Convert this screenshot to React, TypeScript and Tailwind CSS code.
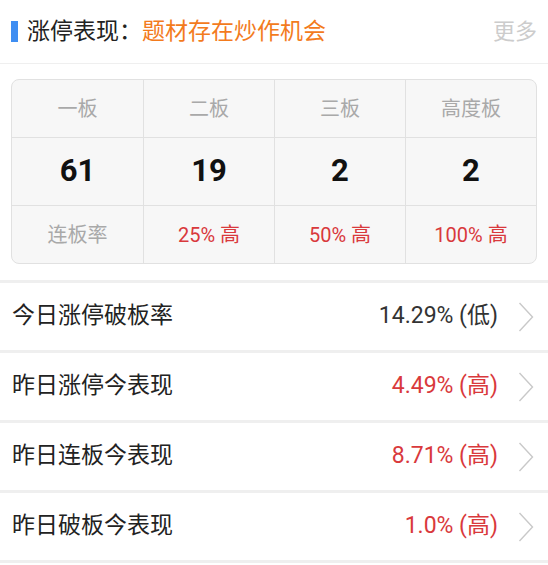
const font = "font-['Roboto','Noto_Sans_CJK_SC',sans-serif]";

type Cell = { head: string; count: number; rate: string; muted?: boolean };

const cells: Cell[] = [
  { head: '一板', count: 61, rate: '连板率', muted: true },
  { head: '二板', count: 19, rate: '25% 高' },
  { head: '三板', count: 2, rate: '50% 高' },
  { head: '高度板', count: 2, rate: '100% 高' },
];

type Row = { label: string; value: string; high: boolean };

const rows: Row[] = [
  { label: '今日涨停破板率', value: '14.29% (低)', high: false },
  { label: '昨日涨停今表现', value: '4.49% (高)', high: true },
  { label: '昨日连板今表现', value: '8.71% (高)', high: true },
  { label: '昨日破板今表现', value: '1.0% (高)', high: true },
];

function Chevron() {
  return (
    <svg width="16" height="30" viewBox="0 0 16 30" fill="none" className="shrink-0">
      <polyline points="1.5,1 14.5,15 1.5,29" stroke="#c9c9c9" strokeWidth="1.4" />
    </svg>
  );
}

export default function App() {
  return (
    <div className={`${font} min-h-[565px] w-[548px] bg-white`}>
      <div className="flex h-[64px] items-center border-b border-[#efefef] pr-[11px]">
        <div className="ml-[11px] h-[21px] w-[7px] bg-[#3f8ef2]" />
        <div className="ml-[9px] text-[23px] leading-none text-[#222222]">涨停表现：</div>
        <div className="text-[23px] leading-none text-[#f37b1d]">题材存在炒作机会</div>
        <div className="ml-auto text-[22px] leading-none text-[#cccccc]">更多</div>
      </div>

      <div className="mx-[11px] mt-[15px] grid grid-cols-4 overflow-hidden rounded-[8px] border border-[#e1e1e1] bg-[#f7f7f7]">
        {cells.map((c, i) => (
          <div
            key={c.head}
            className={`flex h-[57px] items-center justify-center text-[20px] text-[#a9a9a9] ${i > 0 ? 'border-l border-[#e1e1e1]' : ''}`}
          >
            {c.head}
          </div>
        ))}
        {cells.map((c, i) => (
          <div
            key={c.head + '-n'}
            className={`flex h-[68px] items-center justify-center border-t border-[#e1e1e1] text-[31px] font-bold text-[#111111] ${i > 0 ? 'border-l' : ''}`}
          >
            {c.count}
          </div>
        ))}
        {cells.map((c, i) => (
          <div
            key={c.head + '-r'}
            className={`flex h-[58px] items-center justify-center border-t border-[#e1e1e1] text-[20px] ${c.muted ? 'text-[#a9a9a9]' : 'text-[#d9393c]'} ${i > 0 ? 'border-l' : ''}`}
          >
            {c.rate}
          </div>
        ))}
      </div>

      <div className="mt-[16px] border-t-[3px] border-[#efefef]">
        {rows.map((r) => (
          <div
            key={r.label}
            className="flex h-[70px] items-center border-b-[3px] border-[#efefef] pl-[12px] pr-[14px]"
          >
            <span className="text-[23px] text-[#222222]">{r.label}</span>
            <span className={`ml-auto text-[23px] ${r.high ? 'text-[#d9393c]' : 'text-[#333333]'}`}>
              {r.value}
            </span>
            <span className="ml-[20px]">
              <Chevron />
            </span>
          </div>
        ))}
      </div>
    </div>
  );
}
